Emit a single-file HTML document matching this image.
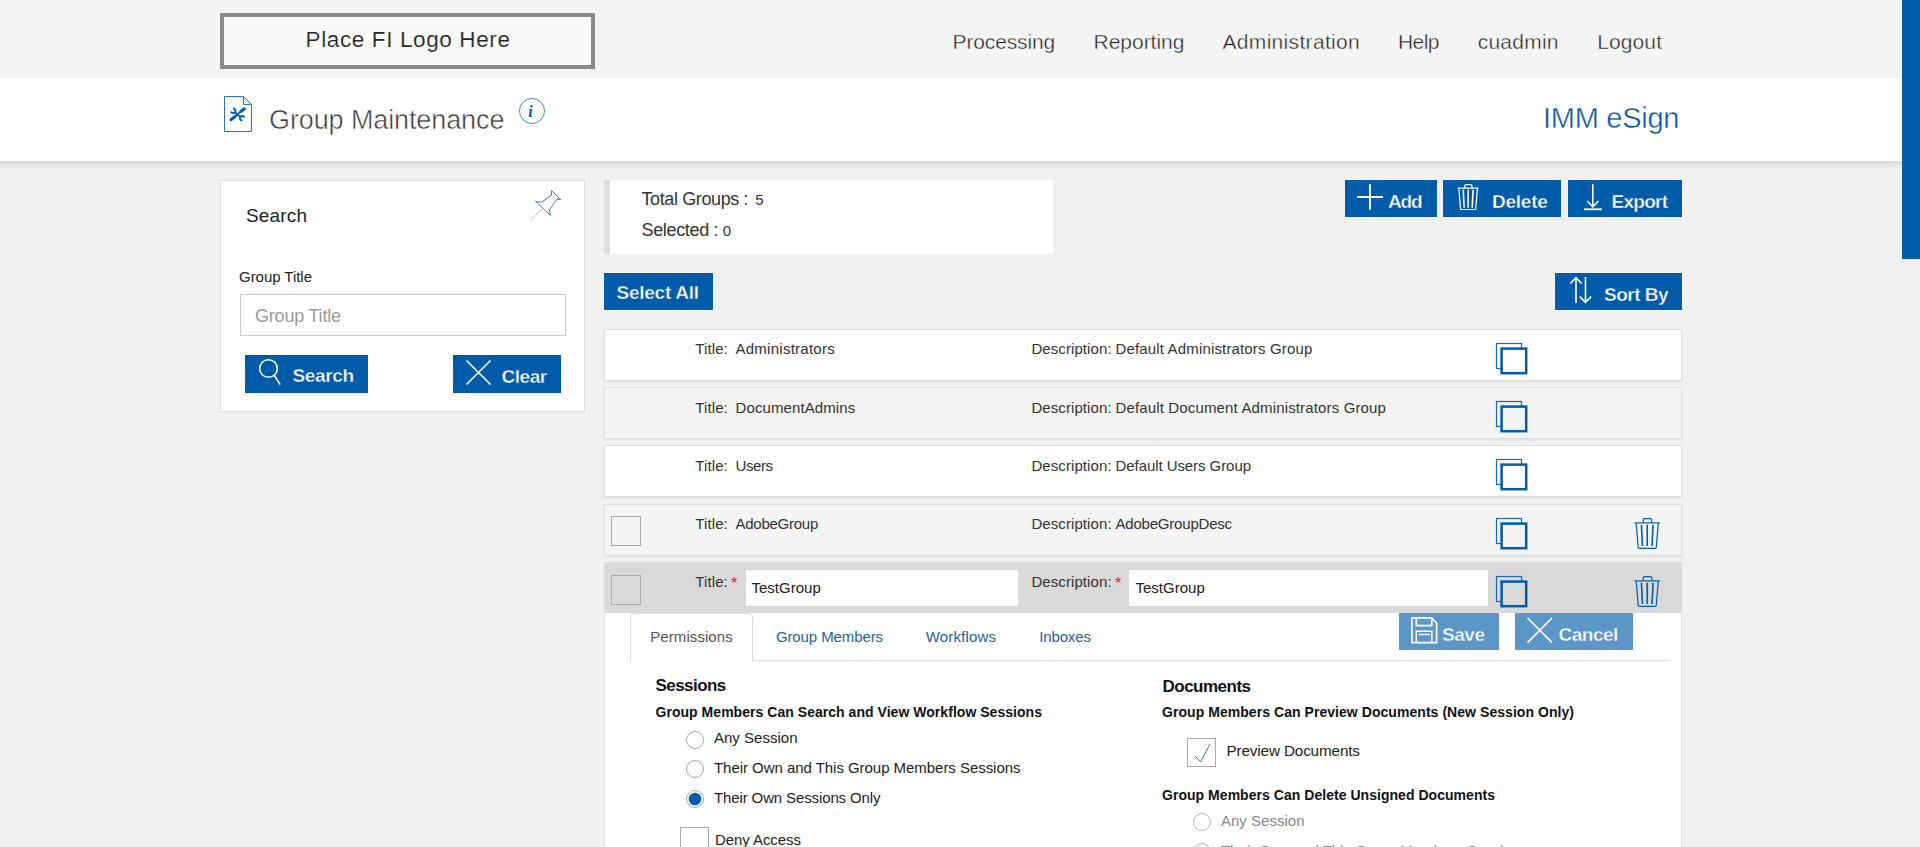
<!DOCTYPE html>
<html><head><meta charset="utf-8"><title>Group Maintenance</title>
<style>
html,body{margin:0;padding:0}
body{width:1920px;height:847px;overflow:hidden;position:relative;background:#f0f0f0;font-family:"Liberation Sans",sans-serif}
.t{position:absolute;white-space:nowrap;line-height:1}
.b{position:absolute;display:block}
</style></head><body>
<div class="b" style="left:0px;top:0px;width:1920px;height:78px;background:#f4f4f4"></div>
<div class="b" style="left:0px;top:78px;width:1920px;height:83px;background:#fff"></div>
<div class="b" style="left:0px;top:161px;width:1920px;height:10px;background:linear-gradient(#d7d7d7 0%,#e6e6e6 45%,#efefef 80%,#f0f0f0 100%)"></div>
<div class="b" style="left:220px;top:13px;width:375px;height:56px;box-sizing:border-box;border:4px solid #8a8a8a;background:#fafafa"></div>
<div class="t" style="left:305.6px;top:29.49px;font-size:22.5px;font-weight:400;color:#262626;letter-spacing:0.620px;-webkit-text-stroke:0.15px #fafafa;">Place FI Logo Here</div>
<div class="t" style="left:952.5px;top:31.46px;font-size:21px;font-weight:400;color:#222;letter-spacing:-0.131px;-webkit-text-stroke:0.4px #f4f4f4;">Processing</div>
<div class="t" style="left:1093.5px;top:31.46px;font-size:21px;font-weight:400;color:#222;letter-spacing:-0.019px;-webkit-text-stroke:0.4px #f4f4f4;">Reporting</div>
<div class="t" style="left:1222.5px;top:31.46px;font-size:21px;font-weight:400;color:#222;letter-spacing:0.318px;-webkit-text-stroke:0.4px #f4f4f4;">Administration</div>
<div class="t" style="left:1398.0px;top:31.46px;font-size:21px;font-weight:400;color:#222;letter-spacing:-0.567px;-webkit-text-stroke:0.4px #f4f4f4;">Help</div>
<div class="t" style="left:1477.7px;top:31.46px;font-size:21px;font-weight:400;color:#222;letter-spacing:0.235px;-webkit-text-stroke:0.4px #f4f4f4;">cuadmin</div>
<div class="t" style="left:1597.2px;top:31.46px;font-size:21px;font-weight:400;color:#222;letter-spacing:0.113px;-webkit-text-stroke:0.4px #f4f4f4;">Logout</div>
<svg class="b" style="left:222px;top:94px;width:32px;height:40px;" viewBox="0 0 32 40"><path d="M2.5 2.5 H21.5 L29.5 10.5 V37.5 H2.5 Z" fill="#fff" stroke="#2f73b8" stroke-width="1"/>
<path d="M21.5 2.5 V10.5 H29.5" fill="none" stroke="#2f73b8" stroke-width="1"/></svg>
<div class="t" style="left:269px;top:106.88px;font-size:27px;font-weight:400;color:#3a3a3a;letter-spacing:-0.109px;-webkit-text-stroke:0.5px #fff;">Group Maintenance</div>
<svg class="b" style="left:518px;top:97px;width:28px;height:28px;" viewBox="0 0 28 28"><circle cx="14" cy="14" r="12.5" fill="none" stroke="#4a86c5" stroke-width="1"/></svg>
<div class="t" style="left:528.2px;top:104.08px;font-size:16px;font-weight:700;color:#005ca9;font-style:italic;font-family:'Liberation Serif',serif;">i</div>
<div class="t" style="left:1543px;top:104.19px;font-size:29px;font-weight:400;color:#00529a;letter-spacing:-0.276px;-webkit-text-stroke:0.45px #fff;">IMM eSign</div>
<div class="b" style="left:1902px;top:0px;width:18px;height:259px;background:#005ca9"></div>
<div class="b" style="left:220px;top:180px;width:365px;height:232px;box-sizing:border-box;border:1px solid #dcdcdc;background:#fff"></div>
<div class="t" style="left:246px;top:205.75px;font-size:19px;font-weight:400;color:#222;letter-spacing:0.158px;">Search</div>
<div class="t" style="left:239px;top:269.32px;font-size:15px;font-weight:400;color:#222;letter-spacing:-0.038px;">Group Title</div>
<div class="b" style="left:240px;top:294px;width:326px;height:42px;box-sizing:border-box;border:1px solid #c8c8c8;background:#fff"></div>
<div class="t" style="left:255px;top:306.79px;font-size:18px;font-weight:400;color:#9a9a9a;letter-spacing:-0.205px;">Group Title</div>
<div class="b" style="left:245px;top:355px;width:123px;height:38px;background:#005ca9"></div>
<div class="t" style="left:292.5px;top:366.44px;font-size:19px;font-weight:700;color:#fff;letter-spacing:-0.335px;-webkit-text-stroke:0.35px #005ca9;">Search</div>
<div class="b" style="left:453px;top:355px;width:108px;height:38px;background:#005ca9"></div>
<div class="t" style="left:501.5px;top:366.75px;font-size:19px;font-weight:700;color:#fff;letter-spacing:-0.457px;-webkit-text-stroke:0.35px #005ca9;">Clear</div>
<div class="b" style="left:604px;top:180px;width:449px;height:74px;box-sizing:border-box;border-left:6px solid #dedede;background:#fff"></div>
<div class="t" style="left:641.5px;top:189.59px;font-size:18px;font-weight:400;color:#333;letter-spacing:-0.389px;">Total Groups :</div>
<div class="t" style="left:755.3px;top:192.12px;font-size:15px;font-weight:400;color:#333;">5</div>
<div class="t" style="left:641.5px;top:220.89px;font-size:18px;font-weight:400;color:#333;letter-spacing:-0.340px;">Selected :</div>
<div class="t" style="left:722.8px;top:223.42px;font-size:15px;font-weight:400;color:#333;">0</div>
<div class="b" style="left:1345px;top:180px;width:92px;height:37px;background:#005ca9;box-shadow:0 0 0 1px #fbf6f0"></div>
<div class="b" style="left:1443px;top:180px;width:118px;height:37px;background:#005ca9;box-shadow:0 0 0 1px #fbf6f0"></div>
<div class="b" style="left:1568px;top:180px;width:114px;height:37px;background:#005ca9;box-shadow:0 0 0 1px #fbf6f0"></div>
<div class="t" style="left:1388px;top:191.94px;font-size:19px;font-weight:700;color:#fff;letter-spacing:-1.117px;-webkit-text-stroke:0.35px #005ca9;">Add</div>
<div class="t" style="left:1492px;top:191.94px;font-size:19px;font-weight:700;color:#fff;letter-spacing:-0.246px;-webkit-text-stroke:0.35px #005ca9;">Delete</div>
<div class="t" style="left:1611.5px;top:191.94px;font-size:19px;font-weight:700;color:#fff;letter-spacing:-0.736px;-webkit-text-stroke:0.35px #005ca9;">Export</div>
<div class="b" style="left:604px;top:273px;width:109px;height:37px;background:#005ca9;box-shadow:0 0 0 1px #fbf6f0"></div>
<div class="t" style="left:616.5px;top:282.94px;font-size:19px;font-weight:700;color:#fff;letter-spacing:-0.248px;-webkit-text-stroke:0.35px #005ca9;">Select All</div>
<div class="b" style="left:1555px;top:273px;width:127px;height:37px;background:#005ca9;box-shadow:0 0 0 1px #fbf6f0"></div>
<div class="t" style="left:1604px;top:284.94px;font-size:19px;font-weight:700;color:#fff;letter-spacing:-0.496px;-webkit-text-stroke:0.35px #005ca9;">Sort By</div>
<div class="b" style="left:604px;top:329px;width:1078px;height:52px;box-sizing:border-box;border:1px solid #dedede;background:#fff;box-shadow:0 1px 2px rgba(0,0,0,0.08)"></div>
<div class="t" style="left:695.3px;top:341.32px;font-size:15px;font-weight:400;color:#333;letter-spacing:0.109px;">Title:</div>
<div class="t" style="left:735.5px;top:341.32px;font-size:15px;font-weight:400;color:#333;letter-spacing:0.256px;">Administrators</div>
<div class="t" style="left:1031.4px;top:341.32px;font-size:15px;font-weight:400;color:#333;letter-spacing:0.090px;">Description:</div>
<div class="t" style="left:1115.5px;top:341.32px;font-size:15px;font-weight:400;color:#333;letter-spacing:0.156px;">Default Administrators Group</div>
<div class="b" style="left:604px;top:387px;width:1078px;height:52px;box-sizing:border-box;border:1px solid #dedede;background:#f4f4f4;box-shadow:0 1px 2px rgba(0,0,0,0.08)"></div>
<div class="t" style="left:695.3px;top:399.52px;font-size:15px;font-weight:400;color:#333;letter-spacing:0.109px;">Title:</div>
<div class="t" style="left:735.5px;top:399.52px;font-size:15px;font-weight:400;color:#333;letter-spacing:0.101px;">DocumentAdmins</div>
<div class="t" style="left:1031.4px;top:399.52px;font-size:15px;font-weight:400;color:#333;letter-spacing:0.090px;">Description:</div>
<div class="t" style="left:1115.5px;top:399.52px;font-size:15px;font-weight:400;color:#333;letter-spacing:0.147px;">Default Document Administrators Group</div>
<div class="b" style="left:604px;top:445px;width:1078px;height:52px;box-sizing:border-box;border:1px solid #dedede;background:#fff;box-shadow:0 1px 2px rgba(0,0,0,0.08)"></div>
<div class="t" style="left:695.3px;top:458.12px;font-size:15px;font-weight:400;color:#333;letter-spacing:0.109px;">Title:</div>
<div class="t" style="left:735.5px;top:458.12px;font-size:15px;font-weight:400;color:#333;letter-spacing:-0.421px;">Users</div>
<div class="t" style="left:1031.4px;top:458.12px;font-size:15px;font-weight:400;color:#333;letter-spacing:0.090px;">Description:</div>
<div class="t" style="left:1115.5px;top:458.12px;font-size:15px;font-weight:400;color:#333;letter-spacing:-0.068px;">Default Users Group</div>
<div class="b" style="left:604px;top:504px;width:1078px;height:52px;box-sizing:border-box;border:1px solid #dedede;background:#f4f4f4;box-shadow:0 1px 2px rgba(0,0,0,0.08)"></div>
<div class="t" style="left:695.3px;top:516.43px;font-size:15px;font-weight:400;color:#333;letter-spacing:0.109px;">Title:</div>
<div class="t" style="left:735.5px;top:516.43px;font-size:15px;font-weight:400;color:#333;letter-spacing:-0.253px;">AdobeGroup</div>
<div class="t" style="left:1031.4px;top:516.43px;font-size:15px;font-weight:400;color:#333;letter-spacing:0.090px;">Description:</div>
<div class="t" style="left:1115.5px;top:516.43px;font-size:15px;font-weight:400;color:#333;letter-spacing:-0.204px;">AdobeGroupDesc</div>
<div class="b" style="left:604px;top:562px;width:1078px;height:51px;background:#d9d9d9"></div>
<div class="t" style="left:695.3px;top:574.33px;font-size:15px;font-weight:400;color:#333;letter-spacing:0.109px;">Title:</div>
<div class="t" style="left:731px;top:576.48px;font-size:16px;font-weight:400;color:#f0141e;">*</div>
<div class="b" style="left:746px;top:570px;width:272px;height:36px;background:#fff"></div>
<div class="t" style="left:751.5px;top:580.33px;font-size:15px;font-weight:400;color:#222;letter-spacing:0.005px;">TestGroup</div>
<div class="t" style="left:1031.4px;top:574.33px;font-size:15px;font-weight:400;color:#333;letter-spacing:0.090px;">Description:</div>
<div class="t" style="left:1115px;top:576.48px;font-size:16px;font-weight:400;color:#f0141e;">*</div>
<div class="b" style="left:1129px;top:570px;width:359px;height:36px;background:#fff"></div>
<div class="t" style="left:1135.5px;top:580.33px;font-size:15px;font-weight:400;color:#222;letter-spacing:0.005px;">TestGroup</div>
<div class="b" style="left:611px;top:516px;width:30px;height:30px;box-sizing:border-box;border:1.5px solid #a8a8a8;background:#f4f4f4"></div>
<div class="b" style="left:611px;top:575px;width:30px;height:30px;box-sizing:border-box;border:1.5px solid #a8a8a8;background:#d9d9d9"></div>
<div class="b" style="left:604px;top:613px;width:1078px;height:240px;box-sizing:border-box;border-left:1px solid #e3e3e3;border-right:1px solid #e3e3e3;background:#fff"></div>
<div class="b" style="left:752px;top:660px;width:917px;height:1px;background:#dcdcdc"></div>
<div class="b" style="left:630px;top:613px;width:123px;height:48px;box-sizing:border-box;border:1px solid #dcdcdc;border-bottom:none;border-radius:5px 5px 0 0;background:#fff"></div>
<div class="t" style="left:650.3px;top:629.12px;font-size:15px;font-weight:400;color:#555;letter-spacing:0.071px;">Permissions</div>
<div class="t" style="left:775.9px;top:629.33px;font-size:15px;font-weight:400;color:#1e62a8;letter-spacing:-0.099px;">Group Members</div>
<div class="t" style="left:925.7px;top:629.33px;font-size:15px;font-weight:400;color:#1e62a8;letter-spacing:0.162px;">Workflows</div>
<div class="t" style="left:1039.3px;top:629.33px;font-size:15px;font-weight:400;color:#1e62a8;letter-spacing:-0.158px;">Inboxes</div>
<div class="b" style="left:1399px;top:613px;width:100px;height:37px;background:#5b96c6"></div>
<div class="t" style="left:1442px;top:625.20px;font-size:19px;font-weight:700;color:#fff;letter-spacing:-0.460px;-webkit-text-stroke:0.35px #5b96c6;">Save</div>
<div class="b" style="left:1515px;top:613px;width:118px;height:37px;background:#5b96c6"></div>
<div class="t" style="left:1558.5px;top:625.20px;font-size:19px;font-weight:700;color:#fff;letter-spacing:-0.483px;-webkit-text-stroke:0.35px #5b96c6;">Cancel</div>
<div class="t" style="left:655.5px;top:677.43px;font-size:17px;font-weight:700;color:#111;letter-spacing:-0.551px;">Sessions</div>
<div class="t" style="left:655.5px;top:705.17px;font-size:14px;font-weight:700;color:#111;letter-spacing:0.038px;">Group Members Can Search and View Workflow Sessions</div>
<svg class="b" style="left:685px;top:729.5px;width:20px;height:20px;" viewBox="0 0 20 20"><circle cx="10" cy="10" r="8.5" fill="#fff" stroke="#a9a9a9" stroke-width="1"/></svg>
<div class="t" style="left:714px;top:730.43px;font-size:15px;font-weight:400;color:#222;letter-spacing:0.012px;">Any Session</div>
<svg class="b" style="left:685px;top:759.2px;width:20px;height:20px;" viewBox="0 0 20 20"><circle cx="10" cy="10" r="8.5" fill="#fff" stroke="#a9a9a9" stroke-width="1"/></svg>
<div class="t" style="left:714px;top:760.43px;font-size:15px;font-weight:400;color:#222;letter-spacing:-0.042px;">Their Own and This Group Members Sessions</div>
<svg class="b" style="left:685px;top:788.9px;width:20px;height:20px;" viewBox="0 0 20 20"><circle cx="10" cy="10" r="8.5" fill="#fff" stroke="#a9a9a9" stroke-width="1"/><circle cx="10" cy="10" r="6.3" fill="#005ca9"/></svg>
<div class="t" style="left:714px;top:790.43px;font-size:15px;font-weight:400;color:#222;letter-spacing:-0.124px;">Their Own Sessions Only</div>
<div class="b" style="left:680px;top:827px;width:29px;height:29px;box-sizing:border-box;border:1px solid #a9a9a9;background:#fff"></div>
<div class="t" style="left:715px;top:831.62px;font-size:15px;font-weight:400;color:#222;letter-spacing:-0.071px;">Deny Access</div>
<div class="t" style="left:1162.5px;top:677.53px;font-size:17px;font-weight:700;color:#111;letter-spacing:-0.509px;">Documents</div>
<div class="t" style="left:1162px;top:705.17px;font-size:14px;font-weight:700;color:#111;letter-spacing:0.052px;">Group Members Can Preview Documents (New Session Only)</div>
<div class="b" style="left:1187px;top:738px;width:29px;height:29px;box-sizing:border-box;border:1px solid #a9a9a9;background:#fff"></div>
<svg class="b" style="left:1187px;top:738px;width:29px;height:29px;" viewBox="0 0 29 29"><path d="M8.1 18 L13.6 23.7 L23 6.2" fill="none" stroke="#3a78bb" stroke-width="1"/></svg>
<div class="t" style="left:1226.5px;top:742.87px;font-size:15.3px;font-weight:400;color:#222;letter-spacing:-0.158px;">Preview Documents</div>
<div class="t" style="left:1162px;top:788.07px;font-size:14px;font-weight:700;color:#111;letter-spacing:0.038px;">Group Members Can Delete Unsigned Documents</div>
<svg class="b" style="left:1192px;top:811.8px;width:20px;height:20px;" viewBox="0 0 20 20"><circle cx="10" cy="10" r="8.5" fill="#fff" stroke="#b5b5b5" stroke-width="1"/></svg>
<div class="t" style="left:1221px;top:813.03px;font-size:15px;font-weight:400;color:#888;letter-spacing:0.012px;">Any Session</div>
<svg class="b" style="left:1192px;top:841.8px;width:20px;height:20px;" viewBox="0 0 20 20"><circle cx="10" cy="10" r="8.5" fill="#fff" stroke="#b5b5b5" stroke-width="1"/></svg>
<div class="t" style="left:1221px;top:843.03px;font-size:15px;font-weight:400;color:#888;letter-spacing:-0.042px;">Their Own and This Group Members Sessions</div>
<svg class="b" style="left:1494px;top:341px;width:36px;height:36px;" viewBox="0 0 36 36"><rect x="2.5" y="2.5" width="25" height="25" fill="none" stroke="#1f67b0" stroke-width="1.2"/>
<rect x="7.6" y="7.6" width="24.6" height="24.6" fill="#fff" stroke="#005ca9" stroke-width="2.5"/></svg>
<svg class="b" style="left:1494px;top:399px;width:36px;height:36px;" viewBox="0 0 36 36"><rect x="2.5" y="2.5" width="25" height="25" fill="none" stroke="#1f67b0" stroke-width="1.2"/>
<rect x="7.6" y="7.6" width="24.6" height="24.6" fill="#f4f4f4" stroke="#005ca9" stroke-width="2.5"/></svg>
<svg class="b" style="left:1494px;top:457px;width:36px;height:36px;" viewBox="0 0 36 36"><rect x="2.5" y="2.5" width="25" height="25" fill="none" stroke="#1f67b0" stroke-width="1.2"/>
<rect x="7.6" y="7.6" width="24.6" height="24.6" fill="#fff" stroke="#005ca9" stroke-width="2.5"/></svg>
<svg class="b" style="left:1494px;top:516px;width:36px;height:36px;" viewBox="0 0 36 36"><rect x="2.5" y="2.5" width="25" height="25" fill="none" stroke="#1f67b0" stroke-width="1.2"/>
<rect x="7.6" y="7.6" width="24.6" height="24.6" fill="#f4f4f4" stroke="#005ca9" stroke-width="2.5"/></svg>
<svg class="b" style="left:1494px;top:574px;width:36px;height:36px;" viewBox="0 0 36 36"><rect x="2.5" y="2.5" width="25" height="25" fill="none" stroke="#1f67b0" stroke-width="1.2"/>
<rect x="7.6" y="7.6" width="24.6" height="24.6" fill="#d9d9d9" stroke="#005ca9" stroke-width="2.5"/></svg>
<svg class="b" style="left:1633.7px;top:518px;width:26.5px;height:31px;" viewBox="0 0 26.5 31"><path d="M0.5 4.90 H26.00" stroke="#005ca9" stroke-width="1.2" fill="none"/><path d="M9.27 4.90 V1.8 Q9.27 0.6 10.47 0.6 H16.56 Q17.76 0.6 17.76 1.8 V4.90" stroke="#005ca9" stroke-width="1.2" fill="none"/><path d="M2.20 5.20 L4.24 29.60 Q4.50 30.40 5.90 30.40 H20.60 Q21.99 30.40 22.26 29.60 L24.30 5.20" stroke="#005ca9" stroke-width="1.2" fill="none"/><path d="M7.42 6.82 L8.48 28.05 M13.25 6.82 V28.05 M19.08 6.82 L18.02 28.05" stroke="#005ca9" stroke-width="1.6" fill="none"/></svg>
<svg class="b" style="left:1633.7px;top:576px;width:26.5px;height:31px;" viewBox="0 0 26.5 31"><path d="M0.5 4.90 H26.00" stroke="#005ca9" stroke-width="1.2" fill="none"/><path d="M9.27 4.90 V1.8 Q9.27 0.6 10.47 0.6 H16.56 Q17.76 0.6 17.76 1.8 V4.90" stroke="#005ca9" stroke-width="1.2" fill="none"/><path d="M2.20 5.20 L4.24 29.60 Q4.50 30.40 5.90 30.40 H20.60 Q21.99 30.40 22.26 29.60 L24.30 5.20" stroke="#005ca9" stroke-width="1.2" fill="none"/><path d="M7.42 6.82 L8.48 28.05 M13.25 6.82 V28.05 M19.08 6.82 L18.02 28.05" stroke="#005ca9" stroke-width="1.6" fill="none"/></svg>
<svg class="b" style="left:1355px;top:182px;width:30px;height:30px;" viewBox="0 0 30 30"><path d="M15 2.2 V27.8 M2 15 H28" stroke="#fff" stroke-width="1.9" fill="none"/></svg>
<svg class="b" style="left:1457.2px;top:184px;width:22.3px;height:26.2px;" viewBox="0 0 22.3 26.2"><path d="M0.5 4.14 H21.80" stroke="#fff" stroke-width="1.2" fill="none"/><path d="M7.80 4.14 V1.8 Q7.80 0.6 9.00 0.6 H13.74 Q14.94 0.6 14.94 1.8 V4.14" stroke="#fff" stroke-width="1.2" fill="none"/><path d="M1.85 4.44 L3.57 24.80 Q3.79 25.60 5.06 25.60 H17.24 Q18.51 25.60 18.73 24.80 L20.45 4.44" stroke="#fff" stroke-width="1.2" fill="none"/><path d="M6.24 5.76 L7.14 23.71 M11.15 5.76 V23.71 M16.06 5.76 L15.16 23.71" stroke="#fff" stroke-width="1.5" fill="none"/></svg>
<svg class="b" style="left:1582px;top:182px;width:22px;height:30px;" viewBox="0 0 22 30"><path d="M10.8 2.2 V25 M5.2 19 L10.8 24.8 L16.4 19" stroke="#fff" stroke-width="1.6" fill="none"/><path d="M2 27.3 H20" stroke="#fff" stroke-width="1.8" fill="none"/></svg>
<svg class="b" style="left:1568px;top:275px;width:26px;height:30px;" viewBox="0 0 26 30"><path d="M8 2.5 V28 M2.3 8.5 L8 2.7 L13.7 8.5" stroke="#fff" stroke-width="1.6" fill="none"/><path d="M17.5 2 V27.6 M11.8 21.6 L17.5 27.4 L23.2 21.6" stroke="#fff" stroke-width="1.6" fill="none"/></svg>
<svg class="b" style="left:256px;top:357px;width:28px;height:30px;" viewBox="0 0 28 30"><circle cx="12.5" cy="11.5" r="8.8" stroke="#fff" stroke-width="1.6" fill="none"/><path d="M18 18 L24.2 27.6" stroke="#fff" stroke-width="1.6" fill="none"/></svg>
<svg class="b" style="left:464px;top:358px;width:29px;height:29px;" viewBox="0 0 29 29"><path d="M2.5 2.5 L26.5 26.5 M26.5 2.5 L2.5 26.5" stroke="#fff" stroke-width="1.6" fill="none"/></svg>
<svg class="b" style="left:1525px;top:616px;width:29px;height:29px;" viewBox="0 0 29 29"><path d="M2.5 2 L27 26.6 M27 2 L2.5 26.6" stroke="#fff" stroke-width="1.6" fill="none"/></svg>
<svg class="b" style="left:1409px;top:615px;width:30px;height:30px;" viewBox="0 0 30 30"><path d="M2.9 2.9 H22.5 L27.6 8 V27.6 H2.9 Z" stroke="#fff" stroke-width="1.7" fill="none"/>
<path d="M7.3 2.9 V10.6 H22.8 V2.9" stroke="#fff" stroke-width="1.7" fill="none"/>
<path d="M7.3 27.6 V16.3 H22.8 V27.6 M9.6 19.5 H20.9" stroke="#fff" stroke-width="1.5" fill="none"/></svg>
<svg class="b" style="left:528px;top:186px;width:36px;height:36px;" viewBox="0 0 36 36"><path d="M23.4 4.5 L32.7 13.5 L28.9 13.3 L21.5 23.8 L22.3 29.3 L7.6 15.3 L13.4 16.4 L23.6 9.1 Z" stroke="#3574b8" stroke-width="0.95" fill="none" stroke-linejoin="round"/><path d="M14.4 22.7 L2.3 34.4" stroke="#9dbde0" stroke-width="0.8" fill="none"/></svg>
<svg class="b" style="left:222px;top:94px;width:32px;height:40px;" viewBox="0 0 32 40"><path d="M8.9 25.9 L13.4 22.1" stroke="#005ca9" stroke-width="3" stroke-linecap="round" fill="none"/>
<path d="M13 22.4 L19 17.3" stroke="#005ca9" stroke-width="1.7" fill="none"/>
<path d="M18.8 17.5 L22.4 14.8" stroke="#005ca9" stroke-width="3" stroke-linecap="round" fill="none"/>
<path d="M13.06 18.13 L18.24 22.87" stroke="#005ca9" stroke-width="2" fill="none"/>
<path d="M8.65 17.80 L9.86 18.67 L11.58 19.07 L13.07 18.14 L13.47 16.42 L12.54 14.93 L11.32 14.06" stroke="#005ca9" stroke-width="1.9" fill="none" stroke-linejoin="round"/>
<path d="M19.98 26.94 L18.76 26.07 L17.83 24.58 L18.23 22.86 L19.72 21.93 L21.44 22.33 L22.65 23.20" stroke="#005ca9" stroke-width="1.9" fill="none" stroke-linejoin="round"/></svg>
</body></html>
